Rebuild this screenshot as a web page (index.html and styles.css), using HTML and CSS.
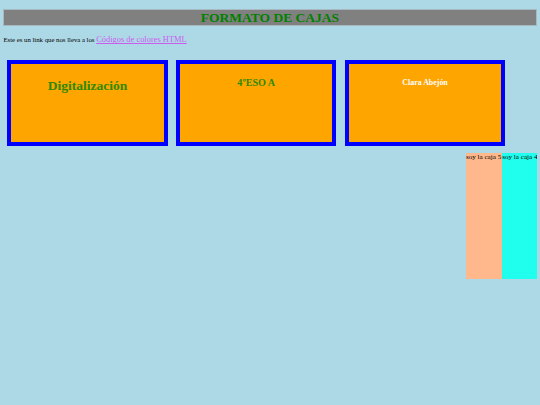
FILE: index.html
```html
<!DOCTYPE html>
<html lang="es">
<head>
<meta charset="utf-8">
<title>Formato de cajas</title>
<link rel="stylesheet" href="styles.css">
</head>
<body>
<h1 class="title">FORMATO DE CAJAS</h1>
<p class="intro">Este es un link que nos lleva a los <a class="link" href="#">Códigos de colores HTML</a></p>
<div class="boxes">
  <div class="box"><h1 class="box-h1">Digitalización</h1></div>
  <div class="box"><h2 class="box-h2">4ºESO A</h2></div>
  <div class="box"><h3 class="box-h3">Clara Abejón</h3></div>
</div>
<div class="side">
  <div class="caja caja5">soy la caja 5</div>
  <div class="caja caja4">soy la caja 4</div>
</div>
</body>
</html>
```
FILE: styles.css
```css
html, body {
  background: #add8e6;
}
body {
  margin: 3.4px;
  font-family: "Liberation Serif", "Times New Roman", serif;
  font-size: 6.75px;
  color: #000;
}
.title {
  margin: 5.5px 0 0;
  font-size: 13.5px;
  line-height: 15px;
  text-align: center;
  color: #008000;
  background: #808080;
  border: 1px solid #a8b8c0;
}
.intro {
  margin: 8.5px 0 0;
  line-height: 9.7px;
  padding-top: 1px;
}
.link {
  font-size: 8.44px;
  color: #cc5cf0;
  text-decoration: underline;
}
.boxes {
  display: flex;
  gap: 8.4px;
  margin: 14.5px 0 0 3.9px;
}
.box {
  box-sizing: border-box;
  width: 160.4px;
  height: 86px;
  border: 4.2px solid #0000ff;
  background: #ffa500;
  padding-top: 5.3px;
  text-align: center;
}
.box-h1 {
  margin: 9px 0 0;
  font-size: 13.5px;
  color: #2e8a00;
}
.box-h2 {
  margin: 8.4px 0 0;
  font-size: 10.1px;
  color: #2e8a00;
}
.box-h3 {
  margin: 9.5px 0 0;
  font-size: 7.9px;
  color: #ffffff;
}
.side {
  display: flex;
  justify-content: flex-end;
  margin-top: 7.5px;
}
.caja {
  height: 126px;
  white-space: nowrap;
  line-height: 8.5px;
  font-size: 7.1px;
}
.caja5 {
  width: 36.3px;
  background: #ffb88c;
}
.caja4 {
  width: 34.4px;
  background: #20ffee;
}
```
